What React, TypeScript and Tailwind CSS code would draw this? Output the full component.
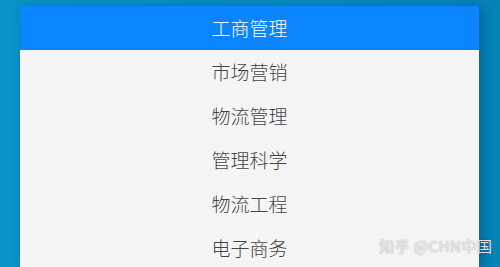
const items = ['市场营销', '物流管理', '管理科学', '物流工程', '电子商务'];

export default function App() {
  return (
    <div
      className="relative h-[267px] w-[500px] overflow-hidden bg-gradient-to-r from-[#0993c6] to-[#0584b9] pt-[6px] pl-[20px]"
      style={{ fontFamily: '"Noto Sans CJK SC", "Noto Sans", sans-serif' }}
    >
      <div className="w-[459px] bg-[#f5f5f5] shadow-[4px_2px_10px_rgba(0,40,80,0.35)]">
        <div className="flex h-[44px] items-center justify-center bg-[#0a84ff] text-[19px] font-light text-white">
          工商管理
        </div>
        {items.map((item) => (
          <div key={item} className="flex h-[44px] items-center justify-center text-[19px] font-light text-[#444]">
            {item}
          </div>
        ))}
      </div>
      <div className="absolute left-[379px] top-[235px] text-[15px] tracking-[0.5px] text-[#e4e4e4] [text-shadow:0_0_2px_rgba(0,0,0,0.3)]">
        知乎 @CHN中国
      </div>
    </div>
  );
}
